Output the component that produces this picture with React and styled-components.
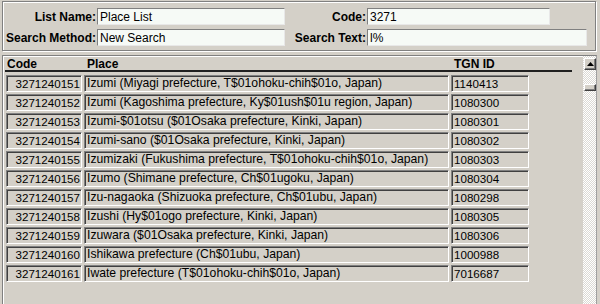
import React from "react";
import styled, { createGlobalStyle } from "styled-components";

const GlobalStyle = createGlobalStyle`
  body {
    margin: 0;
    background: #d4d0c8;
    font-family: "Liberation Sans", Arial, sans-serif;
  }
`;

const Screen = styled.div`
  width: 600px;
  height: 304px;
  overflow: hidden;
  box-sizing: border-box;
  background: #d4d0c8;
  padding: 1px 3px 0 2px;
  display: flex;
  flex-direction: column;
  gap: 4px;
`;

const SearchPanel = styled.div`
  height: 50px;
  box-sizing: border-box;
  margin-right: 1px;
  border: 1px solid #808080;
  box-shadow: inset 1px 1px #fff, 1px 1px #fff;
  padding-top: 6px;
  display: grid;
  grid-template-columns: 94px 188px 82px 1fr;
  grid-auto-rows: 17px;
  row-gap: 4px;
  align-items: center;
`;

const Label = styled.label`
  font-size: 12px;
  font-weight: bold;
  color: #000;
  text-align: right;
  padding-right: 1px;
  white-space: nowrap;
`;

const Field = styled.input`
  width: ${(p) => p.$width}px;
  height: 17px;
  box-sizing: border-box;
  margin: 0;
  padding: 0 2px;
  border: 1px solid;
  border-color: #808080 #e8e8e8 #e8e8e8 #808080;
  background: #f6faf6;
  font-family: "Liberation Sans", Arial, sans-serif;
  font-size: 12px;
  color: #000;
  outline: none;
`;

const ResultPanel = styled.div`
  flex: 1;
  display: flex;
  border-top: 1px solid #808080;
  border-left: 1px solid #808080;
  border-right: 1px solid #a0a0a0;
  box-shadow: inset 1px 1px #fff;
`;

const Grid = styled.div`
  flex: 1;
  padding: 1px 0 0 3px;
`;

const HeaderRow = styled.div`
  width: 567px;
  height: 15px;
  box-sizing: border-box;
  margin-left: -1px;
  border-bottom: 2px solid #202020;
  display: grid;
  grid-template-columns: 78px 367px 80px;
  align-items: center;
`;

const HeaderCell = styled.div`
  font-size: 12px;
  font-weight: bold;
  padding-left: ${(p) => p.$pad}px;
`;

const Body = styled.div`
  margin-top: 3px;
  display: grid;
  grid-template-columns: 76px 365px 78px;
  grid-auto-rows: 17px;
  column-gap: 2px;
  row-gap: 2px;
`;

const Cell = styled.div`
  box-sizing: border-box;
  border: 1px solid;
  border-color: #808080 #fff #fff #808080;
  box-shadow: inset 1px 1px #404040;
  font-size: ${(p) => (p.$text ? 12.2 : 11.6)}px;
  line-height: 15px;
  color: #000;
  white-space: nowrap;
  overflow: hidden;
  text-align: ${(p) => (p.$right ? "right" : "left")};
  padding: ${(p) => (p.$right ? "0 1px 0 0" : "0 0 0 2px")};
`;

const Scrollbar = styled.div`
  width: 13px;
  display: flex;
  flex-direction: column;
  align-items: flex-end;
  background: repeating-conic-gradient(#fff 0 25%, #dcdad4 0 50%) 0 0 / 2px 2px;
`;

const ScrollButton = styled.div`
  width: 12px;
  height: ${(p) => p.$h}px;
  margin-top: ${(p) => p.$top}px;
  box-sizing: border-box;
  background: #d4d0c8;
  border: 1px solid;
  border-color: #fff #404040 #404040 #fff;
  box-shadow: inset -1px -1px #808080;
  display: flex;
  align-items: center;
  justify-content: center;
`;

const rows = [
  ["3271240151", "Izumi (Miyagi prefecture, T$01ohoku-chih$01o, Japan)", "1140413"],
  ["3271240152", "Izumi (Kagoshima prefecture, Ky$01ush$01u region, Japan)", "1080300"],
  ["3271240153", "Izumi-$01otsu ($01Osaka prefecture, Kinki, Japan)", "1080301"],
  ["3271240154", "Izumi-sano ($01Osaka prefecture, Kinki, Japan)", "1080302"],
  ["3271240155", "Izumizaki (Fukushima prefecture, T$01ohoku-chih$01o, Japan)", "1080303"],
  ["3271240156", "Izumo (Shimane prefecture, Ch$01ugoku, Japan)", "1080304"],
  ["3271240157", "Izu-nagaoka (Shizuoka prefecture, Ch$01ubu, Japan)", "1080298"],
  ["3271240158", "Izushi (Hy$01ogo prefecture, Kinki, Japan)", "1080305"],
  ["3271240159", "Izuwara ($01Osaka prefecture, Kinki, Japan)", "1080306"],
  ["3271240160", "Ishikawa prefecture (Ch$01ubu, Japan)", "1000988"],
  ["3271240161", "Iwate prefecture (T$01ohoku-chih$01o, Japan)", "7016687"],
];

export default function App() {
  return (
    <>
      <GlobalStyle />
      <Screen>
        <SearchPanel>
          <Label>List Name:</Label>
          <Field $width={188} readOnly value="Place List" />
          <Label>Code:</Label>
          <Field $width={183} readOnly value="3271" />
          <Label>Search Method:</Label>
          <Field $width={188} readOnly value="New Search" />
          <Label>Search Text:</Label>
          <Field $width={220} readOnly value="l%" />
        </SearchPanel>
        <ResultPanel>
          <Grid>
            <HeaderRow>
              <HeaderCell $pad={2}>Code</HeaderCell>
              <HeaderCell $pad={4}>Place</HeaderCell>
              <HeaderCell $pad={4}>TGN ID</HeaderCell>
            </HeaderRow>
            <Body>
              {rows.map(([code, place, tgn]) => (
                <React.Fragment key={code}>
                  <Cell $right>{code}</Cell>
                  <Cell $text>{place}</Cell>
                  <Cell>{tgn}</Cell>
                </React.Fragment>
              ))}
            </Body>
          </Grid>
          <Scrollbar>
            <ScrollButton $h={12} $top={2}>
              <svg width="7" height="4" viewBox="0 0 7 4">
                <path d="M3.5 0 L7 4 L0 4 Z" fill="#000" />
              </svg>
            </ScrollButton>
            <ScrollButton $h={7} $top={14} />
          </Scrollbar>
        </ResultPanel>
      </Screen>
    </>
  );
}
